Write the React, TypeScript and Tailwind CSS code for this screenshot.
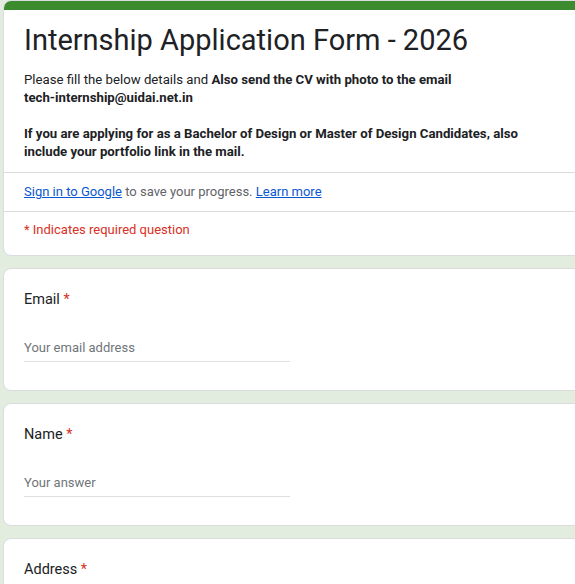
import React from 'react'

const font = { fontFamily: 'Roboto, "Noto Sans", Arial, sans-serif' }

function Question({ label, placeholder }: { label: string; placeholder: string }) {
  return (
    <div className="mt-3 w-[640px] rounded-lg border border-[#dadce0] bg-white px-[20px] pt-[21px] pb-[28px]">
      <div className="text-[14.5px] leading-5 text-[#202124]">
        {label} <span className="text-[#d93025]">*</span>
      </div>
      <div className="mt-[29px] w-[266px] border-b border-[#e0e0e0] pb-[4px] text-[13px] leading-[18px] text-[#70757a]">
        {placeholder}
      </div>
    </div>
  )
}

export default function App() {
  return (
    <div className="h-[584px] overflow-hidden bg-[#e2ede0] pl-[3px]" style={font}>
      <div className="w-[640px] overflow-hidden rounded-lg border border-[#dadce0] bg-white">
        <div className="h-[9px] bg-[#3d8b2f]" />
        <div className="px-[20px] pt-[12px] pb-[11px]">
          <h1 className="text-[29px] leading-9 text-[#202124]">Internship Application Form - 2026</h1>
          <div className="mt-[13px] max-w-[535px] text-[13.2px] leading-[18px] text-[#202124]">
            <p>
              Please fill the below details and{' '}
              <b>
                Also send the CV with photo to the email <span className="whitespace-nowrap">tech-internship@uidai.net.in</span>
              </b>
            </p>
            <p className="mt-[18px] font-bold">
              If you are applying for as a Bachelor of Design or Master of Design Candidates, also include your portfolio link in the mail.
            </p>
          </div>
        </div>
        <div className="border-t border-[#dadce0] px-[20px] py-[9px] text-[13px] leading-5 text-[#5f6368]">
          <a className="text-[#0b57d0] underline">Sign in to Google</a> to save your progress.{' '}
          <a className="text-[#0b57d0] underline">Learn more</a>
        </div>
        <div className="border-t border-[#dadce0] px-[20px] pt-[8px] pb-[15px] text-[13px] leading-5 text-[#d93025]">
          * Indicates required question
        </div>
      </div>
      <Question label="Email" placeholder="Your email address" />
      <Question label="Name" placeholder="Your answer" />
      <Question label="Address" placeholder="Your answer" />
    </div>
  )
}
